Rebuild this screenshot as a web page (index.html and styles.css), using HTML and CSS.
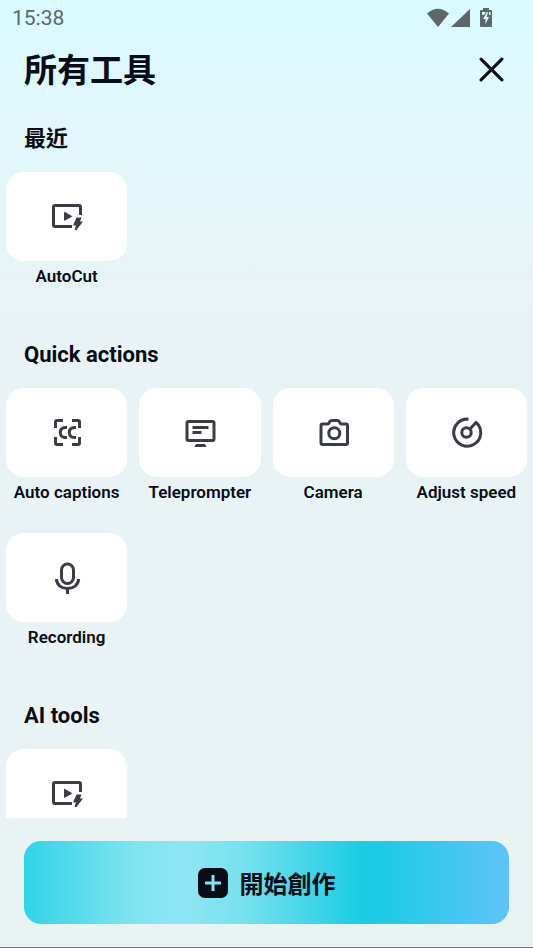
FILE: index.html
```html
<!DOCTYPE html>
<html lang="zh-Hant">
<head>
<meta charset="utf-8">
<meta name="viewport" content="width=device-width, initial-scale=1">
<title>所有工具</title>
<link rel="stylesheet" href="styles.css">
</head>
<body>
<svg class="defs" aria-hidden="true">
  <symbol id="autocut" viewBox="0 0 33 33">
    <path class="line" d="M30.500 15V7Q30.500 5.500 29 5.500H5Q3.500 5.500 3.500 7V25Q3.500 26.500 5 26.500H22"/>
    <path class="solid" d="M14 12.500Q14 11.500 15 12L21.500 15.700Q22.500 16.300 21.500 16.900L15 20.600Q14 21 14 20Z"/>
    <path class="solid" d="M26.500 17.500H31.500L30 21.500H33L26.500 30H24.500L26 25.500H23Z"/>
  </symbol>
</svg>
<div class="app">
  <div class="status">
    <time>15:38</time>
    <svg class="signals" viewBox="0 0 66 20" aria-hidden="true">
      <path d="M0 5.500Q11-4 22 5.500L11 19Z"/>
      <path d="M43 1V19H24Z"/>
      <path fill-rule="evenodd" d="M56 0H62V2H64.500Q65 2 65 3V18Q65 19 64 19H54Q53 19 53 18V3Q53 2 54 2H56ZM55 4V7H57L59 4ZM60 4 56 11H58.500V16L62 9H59.700L61 4ZM62 4V7H63.500V4Z"/>
    </svg>
  </div>
  <header class="header">
    <h1>所有工具</h1>
    <button class="close" type="button" aria-label="關閉">
      <svg viewBox="0 0 24 24" aria-hidden="true"><path d="M2 2 22 22M22 2 2 22"/></svg>
    </button>
  </header>
  <main class="tools">
    <section>
      <h2>最近</h2>
      <div class="grid">
        <button class="tool" type="button"><span class="tile"><svg><use href="#autocut"/></svg></span><span class="label">AutoCut</span></button>
      </div>
    </section>
    <section>
      <h2>Quick actions</h2>
      <div class="grid">
        <button class="tool" type="button"><span class="tile"><svg viewBox="0 0 33 33">
          <path class="line" d="M5.500 12V6Q5.500 4.500 7 4.500H13M22 4.500H28Q29.500 4.500 29.500 6V12M29.500 21V27Q29.500 28.500 28 28.500H22M13 28.500H7Q5.500 28.500 5.500 27V21"/>
          <path class="line" d="M17 11.500H15.500C11.800 11.500 10.300 13.500 10.300 16.500S11.800 21.500 15.500 21.500H17M26 11.500H24.500C20.800 11.500 19.300 13.500 19.300 16.500S20.800 21.500 24.500 21.500H26"/>
        </svg></span><span class="label">Auto captions</span></button>
        <button class="tool" type="button"><span class="tile"><svg viewBox="0 0 33 33">
          <rect class="line" x="4" y="5.500" width="27" height="19" rx="1.500"/>
          <path class="line" d="M9.500 11.500H25.500M9.500 16.500H18.500"/>
          <path class="solid" d="M13 28H22L23.500 31H11.500Z"/>
        </svg></span><span class="label">Teleprompter</span></button>
        <button class="tool" type="button"><span class="tile"><svg viewBox="0 0 33 33">
          <path class="line" d="M5.500 8H10.500Q11.500 8 12 7L13 5.300Q13.500 4.500 14.500 4.500H20.500Q21.500 4.500 22 5.300L23 7Q23.500 8 24.500 8H29Q30.500 8 30.500 9.500V27Q30.500 28.500 29 28.500H5.500Q4 28.500 4 27V9.500Q4 8 5.500 8Z"/>
          <circle class="line" cx="17.300" cy="17.300" r="5.500"/>
        </svg></span><span class="label">Camera</span></button>
        <button class="tool" type="button"><span class="tile"><svg viewBox="0 0 33 33">
          <path class="line join" d="M18.500 3.200A13.500 13.500 0 1 0 26 6.400L20 12.900"/>
          <circle class="line" cx="16.500" cy="16.500" r="4.700"/>
        </svg></span><span class="label">Adjust speed</span></button>
        <button class="tool" type="button"><span class="tile"><svg viewBox="0 0 33 33">
          <rect class="line" x="11.500" y="3" width="12" height="19.500" rx="6"/>
          <path class="line" d="M6.300 18C7 24 11.500 27.500 17.500 27.500S28 24 28.700 18M17.500 27.500V33"/>
        </svg></span><span class="label">Recording</span></button>
      </div>
    </section>
    <section>
      <h2>AI tools</h2>
      <div class="grid">
        <button class="tool" type="button" aria-label="AutoCut"><span class="tile"><svg><use href="#autocut"/></svg></span></button>
      </div>
    </section>
  </main>
  <footer class="footer">
    <button class="create" type="button">
      <svg viewBox="0 0 30 30" aria-hidden="true"><rect width="30" height="30" rx="7"/><path d="M15 7V23M7 15H23"/></svg>
      <span>開始創作</span>
    </button>
  </footer>
</div>
</body>
</html>
```
FILE: styles.css
```css
* {
  box-sizing: border-box;
}

body {
  margin: 0;
  color: #080c17;
  font-family: Roboto, "Noto Sans CJK TC", sans-serif;
}

button {
  margin: 0;
  padding: 0;
  border: 0;
  background: none;
  color: inherit;
  font: inherit;
  cursor: pointer;
}

.defs {
  display: none;
}

.app {
  display: flex;
  flex-direction: column;
  height: 100vh;
  background: linear-gradient(#d9fbff, #dff8fc 100px, #e9f3f5 320px, #e9f3f4);
  border-bottom: 1px solid #74777a;
}

.status {
  display: flex;
  align-items: center;
  justify-content: space-between;
  height: 36px;
  padding: 0 40px 0 12px;
  color: #5b6768;
  font-size: 21px;
}

.signals {
  width: 66px;
  height: 20px;
  fill: currentColor;
}

.header {
  display: flex;
  align-items: center;
  justify-content: space-between;
  height: 66px;
  padding: 0 29px 0 24px;
}

h1 {
  margin: 0;
  padding-top: 4px;
  font-size: 33px;
  font-weight: 600;
  line-height: 48px;
}

.close svg {
  display: block;
  width: 25px;
  height: 25px;
  fill: none;
  stroke: currentColor;
  stroke-width: 3;
  stroke-linecap: round;
}

.tools {
  flex: 1;
  min-height: 0;
  padding: 22px 6px 0;
  overflow-y: auto;
  scrollbar-width: none;
}

section {
  margin-bottom: 53px;
}

h2 {
  margin: 0 18px 18px;
  font-size: 22px;
  font-weight: 700;
  line-height: 30px;
}

.grid {
  display: grid;
  grid-template-columns: repeat(4, 1fr);
  gap: 30px 12px;
}

.tool {
  display: flex;
  flex-direction: column;
  gap: 4px;
}

.tile {
  display: grid;
  place-items: center;
  width: 100%;
  height: 89px;
  border-radius: 18px;
  background: #fff;
}

.tile svg {
  width: 33px;
  height: 33px;
}

.line {
  fill: none;
  stroke: #3b3d46;
  stroke-width: 3;
}

.join {
  stroke-linejoin: round;
}

.solid {
  fill: #3b3d46;
}

.label {
  width: 100%;
  font-size: 17px;
  font-weight: 600;
  line-height: 22px;
  text-align: center;
  white-space: nowrap;
}

.footer {
  padding: 23px 24px;
}

.create {
  display: flex;
  align-items: center;
  justify-content: center;
  gap: 12px;
  width: 100%;
  height: 83px;
  border-radius: 17px;
  background: linear-gradient(90deg, #2fd4e7, #82e3f0 23%, #8fe6f4 33%, #78e1ee 45%, #18cce4 70%, #20cbe6 75%, #5fc3fa);
  font-size: 24px;
  font-weight: 600;
}

.create svg {
  width: 30px;
  height: 30px;
  fill: #080c17;
}

.create path {
  stroke: #83e3ef;
  stroke-width: 3;
}
```
